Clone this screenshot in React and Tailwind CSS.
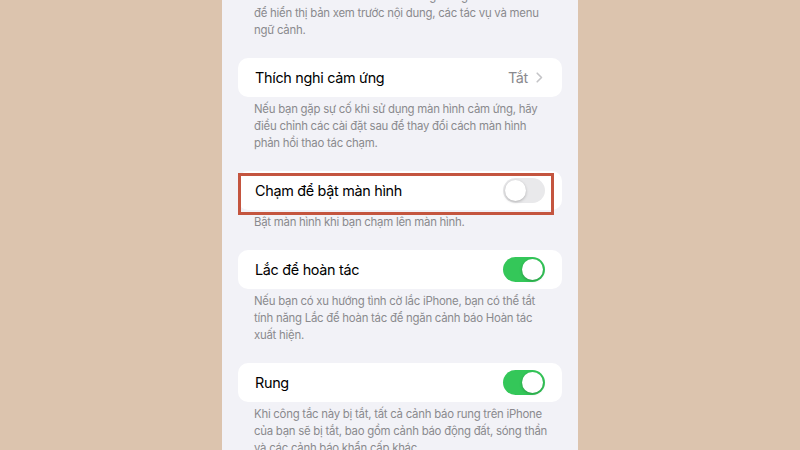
import React from 'react';

const font = { fontFamily: 'Inter, "Noto Sans", sans-serif' };

const Toggle = ({ on }) => (
    <div
        className={
            on
                ? 'w-[42px] h-[25px] rounded-full bg-[#34c759] p-[2px] flex justify-end'
                : 'w-[42px] h-[25px] rounded-full bg-[#e9e9eb] p-[2px] flex justify-start'
        }
    >
        <div className="w-[21px] h-[21px] rounded-full bg-white shadow-[0_1px_3px_rgba(0,0,0,0.25)]" />
    </div>
);

const Chevron = () => (
    <svg width="7" height="11" viewBox="0 0 7 11" fill="none">
        <path d="M1.2 1.2 L5.5 5.5 L1.2 9.8" stroke="#c4c4c7" strokeWidth="1.6" strokeLinecap="round" strokeLinejoin="round" />
    </svg>
);

const Footer = ({ lines }) => (
    <div className="pt-[4px] px-4 text-[11.4px] tracking-[-0.25px] leading-[17px] text-[#8a8a8e] mb-[19px]">
        {lines.map((l, i) => (
            <div key={i} className="whitespace-nowrap">{l}</div>
        ))}
    </div>
);

const Row = ({ title, children, highlight }) => (
    <div className="relative">
        <div className="h-[39px] rounded-[10px] bg-white flex items-center justify-between pl-[17px] pr-[17px]">
            <span className="text-[14.4px] tracking-[-0.3px] text-black">{title}</span>
            {children}
        </div>
        {highlight && (
            <div className="absolute left-0 top-[2px] w-[316px] h-[42px] border-[3px] border-[#c4553f] pointer-events-none" />
        )}
    </div>
);

export default function App() {
    return (
        <div className="w-[800px] h-[450px] bg-[#dcc4ae] flex justify-center overflow-hidden" style={font}>
            <div className="w-[356px] h-full bg-[#f2f2f7] px-4 overflow-hidden">
                <div className="-mt-[16px]">
                    <Footer
                        lines={[
                            'Nhấn trên màn hình với các khoảng thời gian khác nhau',
                            'để hiển thị bản xem trước nội dung, các tác vụ và menu',
                            'ngữ cảnh.',
                        ]}
                    />

                    <Row title="Thích nghi cảm ứng">
                        <div className="flex items-center gap-[8px] pr-[2px]">
                            <span className="text-[14.4px] tracking-[-0.3px] text-[#8a8a8e]">Tắt</span>
                            <Chevron />
                        </div>
                    </Row>
                    <Footer
                        lines={[
                            'Nếu bạn gặp sự cố khi sử dụng màn hình cảm ứng, hãy',
                            'điều chỉnh các cài đặt sau để thay đổi cách màn hình',
                            'phản hồi thao tác chạm.',
                        ]}
                    />

                    <Row title="Chạm để bật màn hình" highlight>
                        <Toggle on={false} />
                    </Row>
                    <Footer lines={['Bật màn hình khi bạn chạm lên màn hình.']} />

                    <Row title="Lắc để hoàn tác">
                        <Toggle on />
                    </Row>
                    <Footer
                        lines={[
                            'Nếu bạn có xu hướng tình cờ lắc iPhone, bạn có thể tắt',
                            'tính năng Lắc để hoàn tác để ngăn cảnh báo Hoàn tác',
                            'xuất hiện.',
                        ]}
                    />

                    <Row title="Rung">
                        <Toggle on />
                    </Row>
                    <Footer
                        lines={[
                            'Khi công tắc này bị tắt, tất cả cảnh báo rung trên iPhone',
                            'của bạn sẽ bị tắt, bao gồm cảnh báo động đất, sóng thần',
                            'và các cảnh báo khẩn cấp khác.',
                        ]}
                    />
                </div>
            </div>
        </div>
    );
}
